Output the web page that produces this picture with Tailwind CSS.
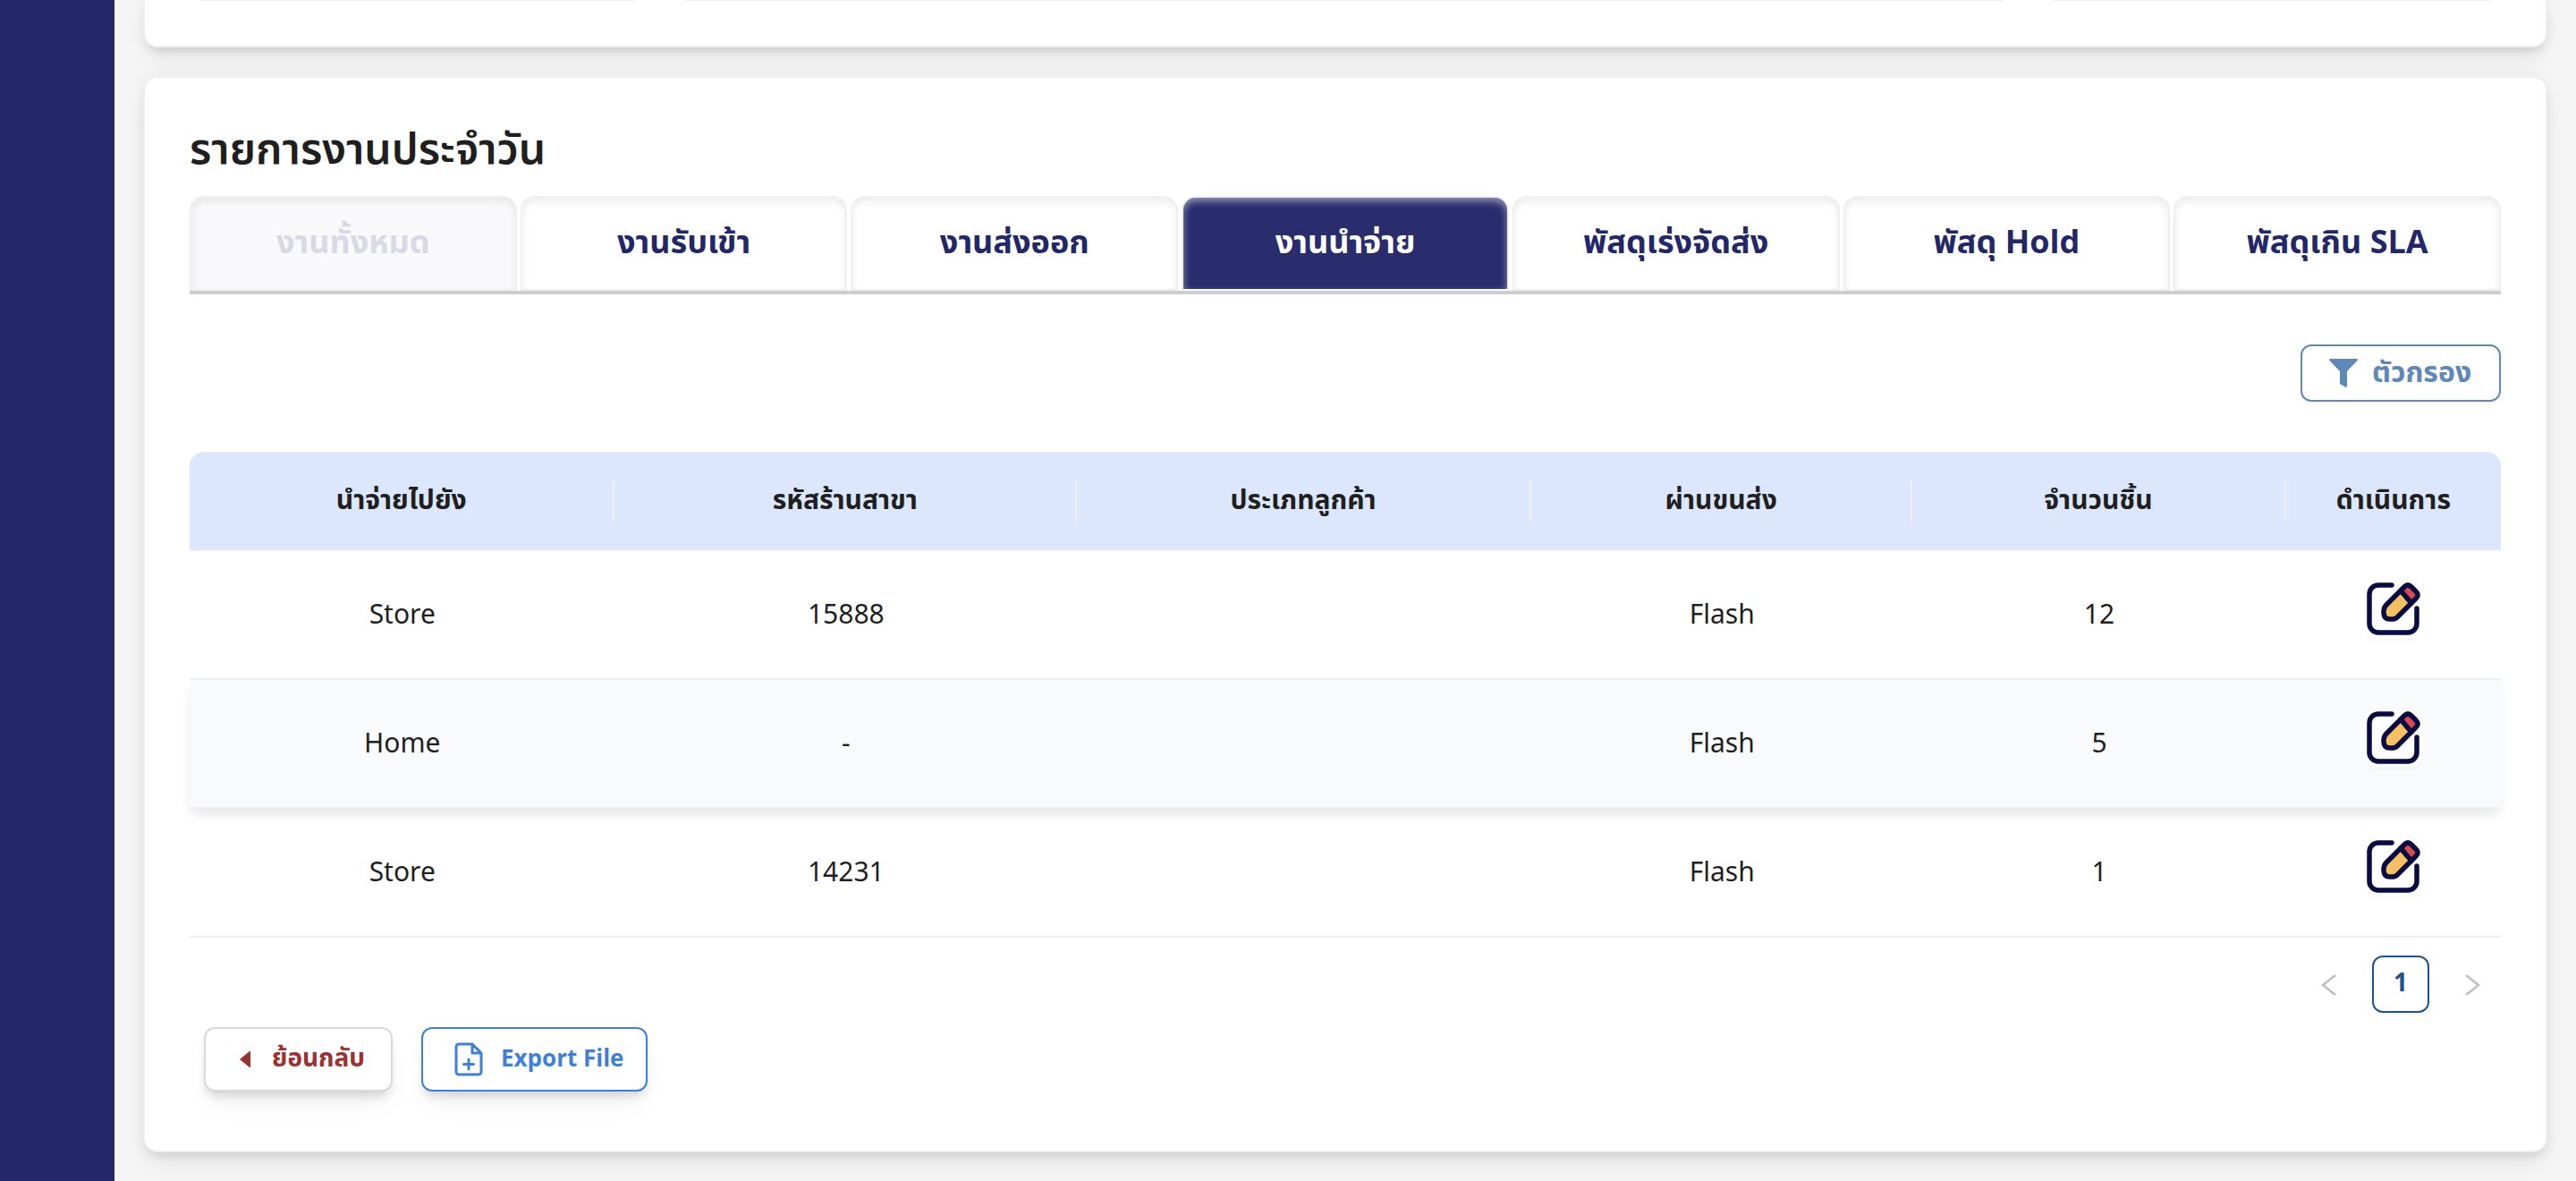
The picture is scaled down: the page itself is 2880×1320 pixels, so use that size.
<!DOCTYPE html>
<html lang="th">
<head>
<meta charset="utf-8">
<title>รายการงานประจำวัน</title>
<script src="https://cdn.jsdelivr.net/npm/@tailwindcss/browser@4"></script>
</head>
<body class="min-h-screen bg-[#f5f5f5] font-['Noto_Sans_Thai','Noto_Sans',sans-serif] text-[#1f1f1f]">
<div class="flex min-h-screen">
  <aside class="w-32 shrink-0 bg-[#222769]"></aside>
  <main class="flex min-w-0 flex-1 flex-col gap-8 px-8 pb-8">
    <section class="h-[53px] rounded-b-2xl border-2 border-t-0 border-[#efefef] bg-white px-[50px] shadow-[0_20px_30px_-6px_rgba(0,0,0,0.05),0_8px_12px_-4px_rgba(0,0,0,0.1),0_0_20px_rgba(0,0,0,0.06)]">
      <div class="grid h-px grid-cols-[510fr_1498fr_514fr] gap-[31px]">
        <div class="px-3"><div class="h-px bg-[#efefef]"></div></div>
        <div class="px-3"><div class="h-px bg-[#efefef]"></div></div>
        <div class="px-3"><div class="h-px bg-[#efefef]"></div></div>
      </div>
    </section>
    <section class="rounded-2xl border-2 border-[#efefef] bg-white px-[50px] pt-12 pb-[66px] shadow-[0_20px_30px_-6px_rgba(0,0,0,0.05),0_8px_12px_-4px_rgba(0,0,0,0.1),0_0_20px_rgba(0,0,0,0.06)]">
      <h1 class="h-[84px] text-5xl leading-[68px] font-semibold">รายการงานประจำวัน</h1>
      <div role="tablist" class="grid grid-cols-7 gap-1 border-b-4 border-[#cecece] text-4xl font-bold text-[#222769]">
        <button role="tab" disabled class="h-[106px] rounded-t-2xl border-2 border-[#efefef] bg-[#f9f9fc] text-[#d9d9e5] shadow-[inset_0_4px_8px_rgba(0,0,0,0.08)]">งานทั้งหมด</button>
        <button role="tab" class="h-[106px] rounded-t-2xl border-2 border-[#efefef] shadow-[inset_0_4px_8px_rgba(0,0,0,0.08)]">งานรับเข้า</button>
        <button role="tab" class="h-[106px] rounded-t-2xl border-2 border-[#efefef] shadow-[inset_0_4px_8px_rgba(0,0,0,0.08)]">งานส่งออก</button>
        <button role="tab" aria-selected="true" class="h-[106px] rounded-t-2xl border-2 border-[#efefef] border-b-white bg-[#292c6d] text-white shadow-[inset_0_4px_8px_rgba(255,255,255,0.5)]">งานนำจ่าย</button>
        <button role="tab" class="h-[106px] rounded-t-2xl border-2 border-[#efefef] shadow-[inset_0_4px_8px_rgba(0,0,0,0.08)]">พัสดุเร่งจัดส่ง</button>
        <button role="tab" class="h-[106px] rounded-t-2xl border-2 border-[#efefef] shadow-[inset_0_4px_8px_rgba(0,0,0,0.08)]">พัสดุ Hold</button>
        <button role="tab" class="h-[106px] rounded-t-2xl border-2 border-[#efefef] shadow-[inset_0_4px_8px_rgba(0,0,0,0.08)]">พัสดุเกิน SLA</button>
      </div>
      <div class="flex justify-end pt-14 pb-14">
        <button class="flex h-16 w-56 items-center gap-4 rounded-xl border-2 border-[#5f88ba] pl-[30px] text-[32px] leading-none font-bold text-[#5f88ba] shadow-[0_4px_0_rgba(0,0,0,0.02)]">
          <svg class="size-8" viewBox="0 0 32 32" fill="currentColor"><path d="M1 0h30q1 0 1 1.500L20 14v17q0 1-1.500 .8L12 28V14L0 1.500Q0 0 1 0z"/></svg>
          ตัวกรอง</button>
      </div>
      <table class="w-full table-fixed border-separate border-spacing-0 text-center text-[30px]">
        <colgroup><col class="w-[18.4%]"><col class="w-[20%]"><col class="w-[19.65%]"><col class="w-[16.5%]"><col class="w-[16.15%]"><col></colgroup>
        <thead class="font-semibold">
          <tr>
            <th class="h-[111px] rounded-tl-2xl border-b-2 border-[#efefef] bg-[#dce7fe] p-0"><div class="h-12 border-r-2 border-[#efefef] leading-12">นำจ่ายไปยัง</div></th>
            <th class="border-b-2 border-[#efefef] bg-[#dce7fe] p-0"><div class="h-12 border-r-2 border-[#efefef] leading-12">รหัสร้านสาขา</div></th>
            <th class="border-b-2 border-[#efefef] bg-[#dce7fe] p-0"><div class="h-12 border-r-2 border-[#efefef] leading-12">ประเภทลูกค้า</div></th>
            <th class="border-b-2 border-[#efefef] bg-[#dce7fe] p-0"><div class="h-12 border-r-2 border-[#efefef] leading-12">ผ่านขนส่ง</div></th>
            <th class="border-b-2 border-[#efefef] bg-[#dce7fe] p-0"><div class="h-12 border-r-2 border-[#efefef] leading-12">จำนวนชิ้น</div></th>
            <th class="rounded-tr-2xl border-b-2 border-[#efefef] bg-[#dce7fe] p-0"><div class="h-12 leading-12">ดำเนินการ</div></th>
          </tr>
        </thead>
        <tbody id="rows"></tbody>
      </table>
      <nav class="flex justify-end gap-4 pt-5 text-[28px]">
        <button disabled aria-label="ก่อนหน้า" class="grid size-16 place-items-center text-[#bfbfbf]"><svg class="size-8" viewBox="0 0 32 32" fill="none" stroke="currentColor" stroke-width="2.500"><path d="M23 6 9 17l14 11"/></svg></button>
        <button class="size-16 rounded-xl border-2 border-[#1f528f] font-bold text-[#1f528f]">1</button>
        <button disabled aria-label="ถัดไป" class="grid size-16 place-items-center text-[#bfbfbf]"><svg class="size-8" viewBox="0 0 32 32" fill="none" stroke="currentColor" stroke-width="2.500"><path d="m9 6 14 11L9 28"/></svg></button>
      </nav>
      <div class="flex gap-8 px-4 pt-4 text-[28px] leading-none font-bold">
        <button class="flex h-[72px] w-[211px] items-center gap-6 rounded-xl border-2 border-[#d9d9d9] bg-white pl-[38px] text-[#9b3131] shadow-[0_20px_30px_-6px_rgba(0,0,0,0.05),0_8px_12px_-4px_rgba(0,0,0,0.16)]">
          <svg class="h-5 w-3" viewBox="0 0 12 20" fill="currentColor"><path d="M11 1h1v18h-1L0 10z"/></svg>
          ย้อนกลับ</button>
        <button class="flex h-[72px] w-[253px] items-center gap-5 rounded-xl border-2 border-[#3c80d9] bg-white pl-[35px] text-[26px] text-[#3c80d9] shadow-[0_20px_30px_-6px_rgba(0,0,0,0.05),0_8px_12px_-4px_rgba(0,0,0,0.16)]">
          <svg class="h-[38px] w-8" viewBox="0 0 32 38" fill="none" stroke="currentColor" stroke-width="3" stroke-linejoin="round" stroke-linecap="round"><path d="M20 2H5a3 3 0 0 0-3 3v28a3 3 0 0 0 3 3h22a3 3 0 0 0 3-3V12zM20 2v10h10M16 19v11M10.500 24.500h11"/></svg>
          Export File</button>
      </div>
    </section>
  </main>
</div>
<template id="row">
  <tr>
    <td class="h-36 border-b-2 border-[#efefef] p-0 pt-0.5"></td>
    <td class="border-b-2 border-[#efefef] p-0 pt-0.5"></td>
    <td class="border-b-2 border-[#efefef] p-0 pt-0.5"></td>
    <td class="border-b-2 border-[#efefef] p-0 pt-0.5"></td>
    <td class="border-b-2 border-[#efefef] p-0 pt-0.5"></td>
    <td class="border-b-2 border-[#efefef] p-0 pb-3">
      <button aria-label="แก้ไข" class="mx-auto block size-16 rounded-xl bg-white shadow-[0_4px_0_rgba(0,0,0,0.02)]">
        <svg class="size-full" viewBox="0 0 64 64" fill="none" stroke="#080c42" stroke-width="5.500" stroke-linecap="round" stroke-linejoin="round"><path d="M30 5H15A10 10 0 0 0 5 15v33a10 10 0 0 0 10 10h33a10 10 0 0 0 10-10V31"/><path fill="#f4c060" d="M40 11 24 27q-3 3-3 7v2q0 7 7 7h2q4 0 6-2l16-16z"/><path fill="#d94a4f" d="m40 11 4-4q4-4 8 0l5 5q4 4 0 8l-5 5z"/></svg>
      </button>
    </td>
  </tr>
</template>
<script>
  const jobs = [['Store', '15888', '', 'Flash', '12'], ['Home', '-', '', 'Flash', '5'], ['Store', '14231', '', 'Flash', '1']];
  jobs.forEach((job, i) => {
    const tr = document.getElementById('row').content.cloneNode(true).firstElementChild;
    job.forEach((v, j) => tr.cells[j].textContent = v);
    if (i === 1) tr.className = 'bg-[#f8fafc] shadow-[0_8px_12px_-2px_rgba(0,0,0,0.1)]';
    document.getElementById('rows').append(tr);
  });
</script>
</body>
</html>
